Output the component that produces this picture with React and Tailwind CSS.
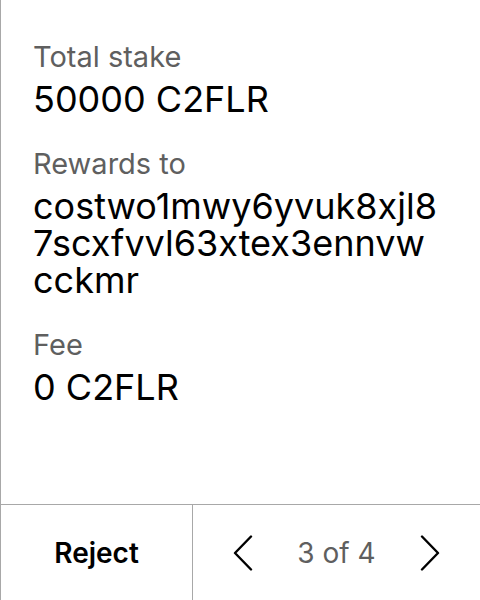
const chunk = (s, n) => s.match(new RegExp(`.{1,${n}}`, 'g'));

const Field = ({ label, value, wrap }) => (
  <div className="flex flex-col gap-[7px]">
    <span className="text-[29px] leading-[34px] text-[#5f5f5f]">{label}</span>
    <span className="text-[36px] leading-[37px] text-black break-all">
      {wrap ? chunk(value, wrap).map((part) => <span key={part} className="block">{part}</span>) : value}
    </span>
  </div>
);

const Chevron = ({ dir }) => (
  <svg width="20" height="36" viewBox="0 0 20 36" fill="none" stroke="black" strokeWidth="2.4" strokeLinecap="round" strokeLinejoin="round">
    {dir === 'left' ? <polyline points="18,1.5 2,18 18,34.5" /> : <polyline points="2,1.5 18,18 2,34.5" />}
  </svg>
);

const App = () => {
  return (
    <div
      className="h-[600px] w-[480px] bg-white flex flex-col border-l border-[#a8a8a8]"
      style={{ fontFamily: 'Inter, "Noto Sans", sans-serif' }}
    >
      <div className="flex-1 flex flex-col gap-[29px] pl-8 pr-6 pt-10">
        <Field label="Total stake" value="50000 C2FLR" />
        <Field label="Rewards to" value="costwo1mwy6yvuk8xjl87scxfvvl63xtex3ennvwcckmr" wrap={20} />
        <Field label="Fee" value="0 C2FLR" />
      </div>
      <div className="h-[96px] flex border-t border-[#a8a8a8]">
        <button className="w-[192px] flex items-center justify-center text-[28px] font-semibold text-black border-r border-[#a8a8a8]">
          Reject
        </button>
        <div className="flex-1 flex items-center justify-between pl-[40px] pr-[40px]">
          <Chevron dir="left" />
          <span className="text-[28px] text-[#5f5f5f]">3 of 4</span>
          <Chevron dir="right" />
        </div>
      </div>
    </div>
  );
};

export default App;
